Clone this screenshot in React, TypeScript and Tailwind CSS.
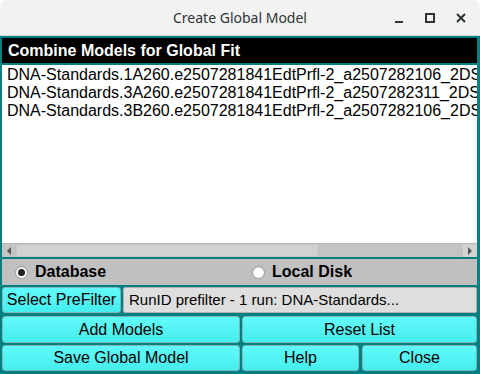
import React from "react";

const rows = [
  "DNA-Standards.1A260.e2507281841EdtPrfl-2_a2507282106_2DSA-FM_01",
  "DNA-Standards.3A260.e2507281841EdtPrfl-2_a2507282311_2DSA-FM_01",
  "DNA-Standards.3B260.e2507281841EdtPrfl-2_a2507282106_2DSA-FM_01",
];

function Btn({ children, className = "" }: { children: React.ReactNode; className?: string }) {
  return (
    <div
      className={
        "flex items-center justify-center rounded-[3px] border border-[#7fb5b5] bg-gradient-to-b from-[#62fafa] to-[#44eeee] text-[16px] text-black leading-none " +
        className
      }
    >
      {children}
    </div>
  );
}

function Radio({ checked }: { checked?: boolean }) {
  return (
    <div className="w-[13px] h-[13px] rounded-full bg-white border border-[#9a9a9a] flex items-center justify-center shadow-[inset_0_1px_1px_rgba(0,0,0,0.15)]">
      {checked && <div className="w-[7px] h-[7px] rounded-full bg-[#222]" />}
    </div>
  );
}

export default function App() {
  return (
    <div className="w-[480px] h-[374px] bg-white overflow-hidden" style={{ fontFamily: '"Liberation Sans", Arial, sans-serif' }}>
      <div
        className="h-[36px] bg-[#f2f2f2] rounded-t-[8px] border-b border-[#d6d6d6] relative flex items-center justify-center text-[14px] text-[#2e3436]"
        style={{ fontFamily: '"Noto Sans", "Open Sans", sans-serif' }}
      >
        <span className="mt-[-1px]">Create Global Model</span>
        <div className="absolute right-0 top-0 h-full flex items-center">
          <svg width="14" height="14" viewBox="0 0 14 14" className="absolute left-[-88px]">
            <rect x="3" y="10" width="8" height="2" fill="#2e3436" />
          </svg>
          <svg width="14" height="14" viewBox="0 0 14 14" className="absolute left-[-57px]">
            <rect x="3" y="3" width="8" height="8" fill="none" stroke="#2e3436" strokeWidth="2" />
          </svg>
          <svg width="14" height="14" viewBox="0 0 14 14" className="absolute left-[-26px]">
            <path d="M3 3 L11 11 M11 3 L3 11" stroke="#2e3436" strokeWidth="2" />
          </svg>
        </div>
      </div>
      <div className="h-[338px] bg-[#008080] pl-[2px] pr-[3px] pt-[2px] flex flex-col">
        <div className="h-[25px] bg-black text-white font-bold text-[16px] leading-none flex items-center pl-[6px]">
          Combine Models for Global Fit
        </div>
        <div className="h-[192px] mt-[2px] bg-white flex flex-col">
          <div className="flex-1 overflow-hidden pl-[5px] pt-[1px] text-[16px] leading-[18px] text-black whitespace-nowrap">
            {rows.map((r) => (
              <div key={r}>{r}</div>
            ))}
          </div>
          <div className="h-[14px] bg-[#c4c4c4] border-t border-[#b8b8b8] flex items-center">
            <div className="w-[14px] h-full flex items-center justify-center">
              <svg width="6" height="8" viewBox="0 0 6 8"><path d="M5 0 L1 4 L5 8 Z" fill="#555" /></svg>
            </div>
            <div className="w-[302px] h-full bg-[#d2d2d2] border border-[#c6c6c6]" />
            <div className="flex-1" />
            <div className="w-[14px] h-full bg-[#d2d2d2] flex items-center justify-center">
              <svg width="6" height="8" viewBox="0 0 6 8"><path d="M1 0 L5 4 L1 8 Z" fill="#555" /></svg>
            </div>
          </div>
        </div>
        <div className="h-[26px] mt-[2px] bg-[#c0c0c0] grid grid-cols-[250px_1fr] items-center text-[16px] font-bold text-black">
          <div className="flex items-center pl-[13px] gap-[7px]">
            <Radio checked />
            <span>Database</span>
          </div>
          <div className="flex items-center gap-[7px]">
            <Radio />
            <span>Local Disk</span>
          </div>
        </div>
        <div className="h-[26px] mt-[2px] flex gap-[2px]">
          <Btn className="w-[119px]">Select PreFilter</Btn>
          <div className="flex-1 bg-[#dedede] border border-[#b0b0b0] rounded-[2px] flex items-center pl-[5px] text-[15px] text-black">
            RunID prefilter - 1 run: DNA-Standards...
          </div>
        </div>
        <div className="h-[27px] mt-[3px] flex gap-[2px]">
          <Btn className="w-[238px]">Add Models</Btn>
          <Btn className="flex-1">Reset List</Btn>
        </div>
        <div className="h-[26px] mt-[2px] flex gap-[2px]">
          <Btn className="w-[238px]">Save Global Model</Btn>
          <Btn className="w-[117px]">Help</Btn>
          <Btn className="flex-1 ml-[1px]">Close</Btn>
        </div>
      </div>
    </div>
  );
}
